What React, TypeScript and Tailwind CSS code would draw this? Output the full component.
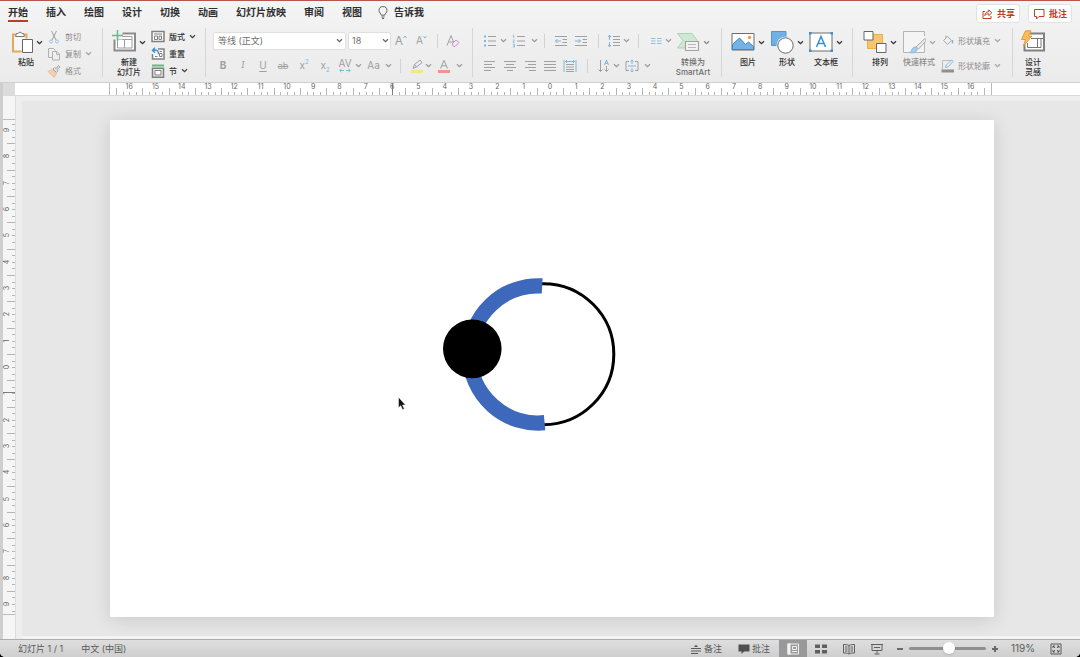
import React, { useState } from 'react';
import clsx from 'clsx';

const TABS = ['开始', '插入', '绘图', '设计', '切换', '动画', '幻灯片放映', '审阅', '视图'];

const H_MARKS = Array.from({ length: 33 }, (_, i) => Math.abs(i - 16));
const V_MARKS = Array.from({ length: 19 }, (_, i) => Math.abs(i - 9));

const Chevron: React.FC<{ className?: string }> = ({ className }) => (
  <svg className={clsx('w-[7px] h-[7px] shrink-0', className)} viewBox="0 0 7 7" fill="none" stroke="currentColor" strokeWidth="1.3">
    <path d="M1 2.200l2.500 2.500L6 2.200" />
  </svg>
);

const Glyph: React.FC<{ children: React.ReactNode; className?: string; size?: number }> = ({ children, className, size = 14 }) => (
  <svg
    className={clsx('shrink-0', size === 24 ? 'w-6 h-6' : size === 12 ? 'w-3 h-3' : 'w-3.5 h-3.5', className)}
    viewBox={`0 0 ${size} ${size}`}
    fill="none"
    stroke="currentColor"
    strokeWidth="1"
  >
    {children}
  </svg>
);

interface BigButtonProps {
  icon: React.ReactNode;
  lines: string[];
  menu?: boolean;
  muted?: boolean;
  dim?: boolean;
}

const BigButton: React.FC<BigButtonProps> = ({ icon, lines, menu = true, muted, dim }) => (
  <button className={clsx('flex flex-col items-center pt-0.5', menu ? 'w-[34px]' : 'w-6', muted ? 'text-[#8a8a8a]' : dim ? 'text-[#6e6e6e]' : 'text-[#2e2e2e]')}>
    <span className="flex items-center gap-[3px]">
      {icon}
      {menu && <Chevron className={muted ? 'text-[#a5a5a5]' : dim ? 'text-[#8a8a8a]' : 'text-[#333]'} />}
    </span>
    <span className="flex flex-col items-center mt-[3px] text-[8px] leading-[10px] font-medium whitespace-nowrap">
      {lines.map((line) => (
        <span key={line}>{line}</span>
      ))}
    </span>
  </button>
);

interface SmallButtonProps {
  icon: React.ReactNode;
  label: string;
  menu?: boolean;
  muted?: boolean;
  tall?: boolean;
}

const SmallButton: React.FC<SmallButtonProps> = ({ icon, label, menu, muted, tall }) => (
  <button
    className={clsx(
      'flex items-center gap-1 text-[8px] whitespace-nowrap',
      tall ? 'h-[25px]' : 'h-[17px]',
      muted ? 'text-[#8c8c8c]' : 'text-[#2e2e2e] font-medium'
    )}
  >
    {icon}
    {label}
    {menu && <Chevron className={muted ? 'text-[#a5a5a5]' : 'text-[#444]'} />}
  </button>
);

// Format tool: one icon or letter, greyed while nothing is selected
const Tool: React.FC<{ label: string; width?: string; children: React.ReactNode }> = ({ label, width = 'w-5', children }) => (
  <button aria-label={label} className={clsx('flex items-center justify-center h-[25px] shrink-0 text-[#a0a0a0]', width)}>
    {children}
  </button>
);

const MenuArrow: React.FC = () => (
  <button aria-label="更多" className="flex items-center h-[25px] shrink-0 text-[#9c9c9c]">
    <Chevron />
  </button>
);

const Divider: React.FC<{ width: string }> = ({ width }) => (
  <span className={clsx('flex justify-center shrink-0', width)}>
    <span className="w-px h-3.5 bg-[#d2d2d2]" />
  </span>
);

const Group: React.FC<{ className?: string; last?: boolean; children: React.ReactNode }> = ({ className, last, children }) => (
  <div className={clsx('flex items-start h-[49px] shrink-0', !last && 'border-r border-[#d6d6d6]', className)}>{children}</div>
);

const ALIGNMENTS = [
  { label: '左对齐', d: 'M1 2.5h11M1 5.5h8M1 8.5h11M1 11.5h7' },
  { label: '居中', d: 'M1 2.5h12M3 5.5h8M1 8.5h12M4 11.5h6' },
  { label: '右对齐', d: 'M2 2.5h11M5 5.5h8M2 8.5h11M6 11.5h7' },
  { label: '两端对齐', d: 'M1 2.5h12M1 5.5h12M1 8.5h12M1 11.5h12' },
];

const TabBar: React.FC = () => {
  const [active, setActive] = useState('开始');

  return (
    <div className="flex items-start h-[27px] pl-2 pr-2">
      <nav className="flex gap-[18px] text-[10px] font-bold text-[#2f2f2f]">
        {TABS.map((tab) => (
          <button
            key={tab}
            onClick={() => setActive(tab)}
            className={clsx('h-[21px] pt-[3px] leading-4 border-b-2 whitespace-nowrap', active === tab ? 'border-[#bf3d24]' : 'border-transparent')}
          >
            {tab}
          </button>
        ))}
        <button className="flex items-center gap-1.5 h-[21px] pt-0.5 -ml-1 pl-0.5">
          <svg className="w-[10px] h-[13px] text-[#666]" viewBox="0 0 10 13" fill="none" stroke="currentColor" strokeWidth="1">
            <path d="M3.2 9.2C3.2 7.4 1 6.8 1 4.6a4 4 0 018 0c0 2.2-2.2 2.8-2.2 4.6zM3.4 11h3.2M4 12.5h2" />
          </svg>
          告诉我
        </button>
      </nav>
      <div className="flex gap-2 ml-auto mt-[3px] text-[9px] font-bold text-[#bd4027]">
        <button className="flex items-center justify-center gap-1 w-[44px] h-[19px] rounded-[3px] bg-white border border-[#e3e1e1]">
          <Glyph size={12}>
            <path d="M4 3.5H2v7h8V8M3.8 7.6c.3-2.6 1.7-3.9 4-3.900V1.900l3 2.900-3 2.700V5.800c-1.800-.1-3 .4-4 1.800z" />
          </Glyph>
          共享
        </button>
        <button className="flex items-center justify-center gap-1 w-[44px] h-[19px] rounded-[3px] bg-white border border-[#e3e1e1]">
          <Glyph size={12}>
            <path d="M1.500 1.500h9.500v7H6l-2.500 2.500V8.500h-2z" />
          </Glyph>
          批注
        </button>
      </div>
    </div>
  );
};

const Ribbon: React.FC = () => {
  const [font, setFont] = useState('等线 (正文)');
  const [size, setSize] = useState('18');

  return (
    <div className="flex h-[54px] overflow-hidden">
      {/* Clipboard */}
      <Group className="pl-[9px] pr-[10px]">
        <BigButton
          lines={['粘贴']}
          icon={
            <Glyph size={24}>
              <path d="M4 4.500h13.500v17H4z" fill="#f6f6f6" stroke="#eaa75a" strokeWidth="2" />
              <path d="M6.500 6.500h9l-1-3h-1.700a1.900 1.900 0 00-3.600 0H7.500z" fill="#fff" stroke="#777" />
              <path d="M12.500 8.500H24V24H12.500z" fill="#f0f0f0" stroke="none" />
              <path d="M13.500 9.500h10v13h-10z" fill="#fff" stroke="#666" />
            </Glyph>
          }
        />
        <div className="flex flex-col items-start ml-1">
          <SmallButton
            muted
            label="剪切"
            icon={
              <Glyph>
                <path d="M4.500 1l4.500 9M9.500 1L5 10" stroke="#a0a0a0" />
                <circle cx="4" cy="11.500" r="1.500" stroke="#9cc4e2" />
                <circle cx="10" cy="11.500" r="1.500" stroke="#9cc4e2" />
              </Glyph>
            }
          />
          <SmallButton
            muted
            menu
            label="复制"
            icon={
              <Glyph className="text-[#b0b0b0]">
                <path d="M5 10.500H1.500v-9h5l2 2M5.500 4.500h4.500l2.500 2.500v6h-7zM9.500 4.500v3h3" />
              </Glyph>
            }
          />
          <SmallButton
            muted
            label="格式"
            icon={
              <Glyph>
                <path d="M1 7.500l4.500-2 4 4.500-2.500 3.500z" fill="#f6cfae" stroke="#e8bd9b" />
                <path d="M6 5l1.500-1.500 1.500 1 2.500-3 1.500 1.500-3 2.500 1 1.500L9.500 8.500z" fill="#e4e4e4" stroke="#a5a5a5" />
              </Glyph>
            }
          />
        </div>
      </Group>

      {/* Slides */}
      <Group className="pl-[9px] pr-[9px]">
        <BigButton
          lines={['新建', '幻灯片']}
          icon={
            <Glyph size={24}>
              <path d="M2.500 3.500h20.500v17H2.500z" stroke="#8b8b8b" strokeWidth="2" fill="#fff" />
              <path d="M5.500 6.500H20v3H5.500zM5.500 9.500v8.500H20V9.500M12.500 9.500V18" stroke="#9d9d9d" />
              <path d="M0 0h10.500v9.500H0z" fill="#f0f0f0" stroke="none" />
              <path d="M5.500 0v11M0 5.500h11" stroke="#5fbd86" strokeWidth="1.500" />
            </Glyph>
          }
        />
        <div className="flex flex-col items-start ml-[5px]">
          <SmallButton
            menu
            label="版式"
            icon={
              <Glyph className="text-[#808080]">
                <path d="M1 1.500h12v10H1z" strokeWidth="1.500" fill="#fff" />
                <path d="M3 4h8M3.500 6h3v3.500h-3zM8 6h2.500v3.500H8z" />
              </Glyph>
            }
          />
          <SmallButton
            label="重置"
            icon={
              <Glyph className="text-[#808080]">
                <path d="M7 2h6v10H1.500V7" strokeWidth="1.500" fill="#fff" />
                <path d="M8.500 4.500H11M4 9.500h2.500M8.500 6.500H11v3H8.500z" />
                <path d="M4 .8L1.500 3.300 4 5.800M1.500 3.300H5c2 0 2.500 1.500 2.500 4" stroke="#3f8fd0" strokeWidth="1.400" />
              </Glyph>
            }
          />
          <SmallButton
            menu
            label="节"
            icon={
              <Glyph className="text-[#808080]">
                <path d="M1 1.500h12" stroke="#5fbd86" strokeWidth="2" />
                <path d="M1.500 4.200h11v9h-11z" strokeWidth="1.500" />
                <path d="M4 6.500h6v4.500H4z" fill="#fff" />
              </Glyph>
            }
          />
        </div>
      </Group>

      {/* Font */}
      <Group className="flex-col pl-[7px] pr-2">
        <div className="flex items-center h-[25px]">
          <label className="relative flex items-center w-[133px]">
            <select
              aria-label="字体"
              value={font}
              onChange={(e) => setFont(e.target.value)}
              className="appearance-none w-full h-[18px] pl-1 bg-white border border-[#e0e0e0] rounded-[2px] text-[9px] leading-4 text-[#6f6f6f] outline-none"
            >
              <option>等线 (正文)</option>
              <option>等线 Light</option>
            </select>
            <Chevron className="absolute right-[3px] text-[#666] pointer-events-none" />
          </label>
          <label className="relative flex items-center w-[43px] ml-0.5">
            <select
              aria-label="字号"
              value={size}
              onChange={(e) => setSize(e.target.value)}
              className="appearance-none w-full h-[18px] pl-[3px] bg-white border border-[#e0e0e0] rounded-[2px] text-[9px] leading-4 text-[#6f6f6f] outline-none"
            >
              <option>18</option>
              <option>20</option>
              <option>24</option>
            </select>
            <Chevron className="absolute right-[2px] text-[#666] pointer-events-none" />
          </label>
          <Tool label="增大字号">
            <span className="text-[12px]">A</span>
            <svg className="w-1 h-1 mb-2" viewBox="0 0 4 4" fill="none" stroke="#83b9df">
              <path d="M.5 3L2 1l1.500 2" />
            </svg>
          </Tool>
          <Tool label="减小字号" width="w-[21px]">
            <span className="text-[10px]">A</span>
            <svg className="w-1 h-1 mb-2" viewBox="0 0 4 4" fill="none" stroke="#83b9df">
              <path d="M.5 1L2 3l1.500-2" />
            </svg>
          </Tool>
          <Divider width="w-[10px]" />
          <Tool label="清除格式" width="w-[22px]">
            <Glyph>
              <path d="M1 11.500L5 1.500l4 10M2.500 8h4.500" />
              <path d="M6 10l4-4 3 2.500-4 4H7.500z" fill="#f0eaf2" stroke="#c88fd0" />
            </Glyph>
          </Tool>
        </div>
        <div className="flex items-center h-[25px] text-[10px]">
          <Tool label="加粗">
            <span className="font-bold">B</span>
          </Tool>
          <Tool label="倾斜">
            <span className="font-serif italic">I</span>
          </Tool>
          <Tool label="下划线">
            <span className="underline underline-offset-2">U</span>
          </Tool>
          <Tool label="删除线">
            <span className="text-[9px] line-through">ab</span>
          </Tool>
          <Tool label="上标" width="w-[22px]">
            x<span className="text-[6px] mb-2 text-[#83b9df]">2</span>
          </Tool>
          <Tool label="下标">
            x<span className="text-[6px] mt-2 text-[#83b9df]">2</span>
          </Tool>
          <Tool label="字符间距">
            <span className="flex flex-col items-center leading-[9px]">
              AV
              <svg className="w-3 h-[5px]" viewBox="0 0 12 5" fill="none" stroke="#83b9df">
                <path d="M5 2.500H.8M2.500.8L.8 2.500l1.700 1.700M7 2.500h4.200M9.500.8l1.700 1.700-1.700 1.700" />
              </svg>
            </span>
          </Tool>
          <MenuArrow />
          <Tool label="更改大小写" width="w-[23px]">Aa</Tool>
          <MenuArrow />
          <Divider width="w-[16px]" />
          <Tool label="突出显示颜色" width="w-[17px]">
            <Glyph>
              <path d="M1 12.500h12" stroke="#f0ea7c" strokeWidth="3" />
              <path d="M3 9.500l1.500-4L10 1l2 2.500L6.500 8zM4.500 5.500l2 2.500" />
            </Glyph>
          </Tool>
          <MenuArrow />
          <Tool label="字体颜色" width="w-6">
            <Glyph>
              <path d="M1 12.500h12" stroke="#f3938b" strokeWidth="3" />
              <path d="M3.500 9.500L7 1.300l3.500 8.200M4.700 6.800h4.600" />
            </Glyph>
          </Tool>
          <MenuArrow />
        </div>
      </Group>

      {/* Paragraph */}
      <Group className="pl-[7px] pr-[11px]">
        <div className="flex flex-col">
          <div className="flex items-center h-[25px]">
            <Tool label="项目符号">
              <Glyph>
                <path d="M5 2.500h8M5 7h8M5 11.500h8" />
                <path d="M1 2.500h2M1 7h2M1 11.500h2" stroke="#7fb6dd" strokeWidth="2" />
              </Glyph>
            </Tool>
            <MenuArrow />
            <Tool label="编号" width="w-6">
              <Glyph>
                <path d="M5 2.500h8M5 7h8M5 11.500h8" />
                <path d="M.8 1.500l1-.5v3M.8 6h1.700L.9 8.500h1.800M.8 10.500h1.700v2.500H.8M1.200 11.800h1.300" stroke="#7fb6dd" strokeWidth=".8" />
              </Glyph>
            </Tool>
            <MenuArrow />
            <Divider width="w-[13px]" />
            <Tool label="减少缩进">
              <Glyph>
                <path d="M1 2.500h12M8.500 5.500H13M8.500 8.500H13M1 11.500h12" />
                <path d="M7 7H1.500M3.500 5L1.500 7l2 2" stroke="#7fb6dd" />
              </Glyph>
            </Tool>
            <Tool label="增加缩进">
              <Glyph>
                <path d="M1 2.500h12M8.500 5.500H13M8.500 8.500H13M1 11.500h12" />
                <path d="M1 7h5.500M4.500 5l2 2-2 2" stroke="#7fb6dd" />
              </Glyph>
            </Tool>
            <Divider width="w-[14px]" />
            <Tool label="行距" width="w-[18px]">
              <Glyph>
                <path d="M6 2.500h7M6 5.500h7M6 8.500h7M6 11.500h7" />
                <path d="M2.500 1v5M1 3l1.500-1.800L4 3M2.500 8v5M1 11l1.500 1.800L4 11" stroke="#7fb6dd" />
              </Glyph>
            </Tool>
            <MenuArrow />
            <Divider width="w-[17px]" />
            <Tool label="分栏" width="w-[18px]">
              <Glyph>
                <path d="M2 4.500h4.500M2 7h4.500M2 9.500h4.500M8 4.500h4.500M8 7h4.500M8 9.500h4.500" stroke="#8fc0e2" />
              </Glyph>
            </Tool>
            <MenuArrow />
          </div>
          <div className="flex items-center h-[25px]">
            {ALIGNMENTS.map(({ label, d }) => (
              <Tool key={label} label={label}>
                <Glyph>
                  <path d={d} />
                </Glyph>
              </Tool>
            ))}
            <Tool label="分散对齐">
              <Glyph>
                <path d="M3 5.500h8M3 8h8M3 10.500h8M3 12.500h8" />
                <path d="M1 1v12M13 1v12M2.500 2.500h9M4 1L2.500 2.500 4 4M10 1l1.500 1.500L10 4" stroke="#7fb6dd" />
              </Glyph>
            </Tool>
            <Divider width="w-[14px]" />
            <Tool label="文字方向" width="w-[19px]">
              <Glyph>
                <path d="M3.500 1v11.500M1.500 10.500l2 2 2-2M9.500 7v5.500M7.500 10.500l2 2 2-2" />
                <path d="M7.500 6L9.500 1l2 5M8.200 4.400h2.600" stroke="#7fb6dd" />
              </Glyph>
            </Tool>
            <MenuArrow />
            <Tool label="对齐文本" width="w-6">
              <Glyph>
                <path d="M4 2.500H1v9h3M10 2.500h3v9h-3" />
                <path d="M3 7h8M7 1v4M5.500 2.500L7 1l1.500 1.500M7 13V9M5.500 11.500L7 13l1.500-1.500" stroke="#7fb6dd" />
              </Glyph>
            </Tool>
            <MenuArrow />
          </div>
        </div>
        <div className="ml-1">
          <BigButton
            dim
            lines={['转换为', 'SmartArt']}
            icon={
              <Glyph size={24}>
                <path d="M1.500 3.500h14.500l5 6.500-3 8H1.500l5.500-7.500z" fill="#cfe8d4" stroke="#a9d3b1" />
                <path d="M9.500 11.500h13v9h-13z" fill="#f3f3f3" stroke="#a3a3a3" strokeWidth="1.200" />
                <path d="M12 14.500h8M12 17.500h8" stroke="#b8b8b8" />
              </Glyph>
            }
          />
        </div>
      </Group>

      {/* Insert */}
      <Group className="gap-[5px] pl-[9px] pr-[9px]">
        <BigButton
          lines={['图片']}
          icon={
            <Glyph size={24}>
              <path d="M1 3.500h22v16.500H1z" fill="#fff" stroke="#6d6d6d" />
              <path d="M1.500 14.500l7-6.500 6 6.500 3-2.500 5 4.500v3h-21z" fill="#74b2e6" stroke="#3d86c4" />
              <circle cx="18.500" cy="7.500" r="1.700" fill="#f09a4a" stroke="none" />
            </Glyph>
          }
        />
        <BigButton
          lines={['形状']}
          icon={
            <Glyph size={24}>
              <path d="M1.500 1.500h14.500v14H1.500z" fill="#6fb0e6" stroke="#4f97d3" />
              <circle cx="15.500" cy="15.500" r="9" fill="#f0f0f0" stroke="none" />
              <circle cx="15.500" cy="15.500" r="7.700" fill="#fff" stroke="#666" />
            </Glyph>
          }
        />
        <BigButton
          lines={['文本框']}
          icon={
            <Glyph size={24}>
              <path d="M1 3h22v18H1z" fill="#fff" stroke="#6d6d6d" />
              <path d="M7.500 17L12 6.500 16.500 17M9 13.500h6" stroke="#3a8fd3" strokeWidth="1.500" />
              <path d="M0 2h2.500v2.500H0zM21.500 2H24v2.500h-2.500zM0 19.500h2.500V22H0zM21.500 19.500H24V22h-2.500z" fill="#3a8fd3" stroke="none" />
            </Glyph>
          }
        />
      </Group>

      {/* Arrange and shape styles */}
      <Group className="pl-[10px] pr-[11px]">
        <BigButton
          lines={['排列']}
          icon={
            <Glyph size={24}>
              <path d="M4.500 4.500h15v14h-15z" fill="#f6c66a" stroke="#e9ae4d" />
              <path d="M1 1.500h9v8.500H1zM13.500 13.500h9.500v9h-9.500z" fill="#fff" stroke="#666" />
            </Glyph>
          }
        />
        <div className="ml-[5px]">
          <BigButton
            muted
            lines={['快速样式']}
            icon={
              <Glyph size={24}>
                <path d="M22.500 12v10.500H1.500v-21h21V6" fill="#f4f4f4" stroke="#b5b5b5" />
                <path d="M14 17l9-8.500c1 .6 1.500 1.500.5 3L16.500 19z" fill="#ececec" stroke="#a8a8a8" />
                <path d="M8 22.500c2-.5 1-5 5-5.500 2.500 1 2.500 2.500 1.500 4-1.500 2-4.500 2.200-6.500 1.500z" fill="#a9cdec" stroke="#8ab8df" />
              </Glyph>
            }
          />
        </div>
        <div className="flex flex-col items-start ml-1">
          <SmallButton
            muted
            menu
            tall
            label="形状填充"
            icon={
              <Glyph>
                <path d="M3.500 6.500l4-4 4 4-4 4zM6 4V1.500" stroke="#a5a5a5" />
                <path d="M12.500 6v3.500" stroke="#7fb6dd" strokeWidth="1.500" />
              </Glyph>
            }
          />
          <SmallButton
            muted
            menu
            tall
            label="形状轮廓"
            icon={
              <Glyph>
                <path d="M2.500 10V1.500H13" stroke="#bbb" />
                <path d="M5.500 8.500l.7-2.500L11.500 1l1.500 1.500L8 8z" stroke="#8dbde0" />
                <path d="M1.500 12h12.500" stroke="#8f8f8f" strokeWidth="3" />
              </Glyph>
            }
          />
        </div>
      </Group>

      {/* Designer */}
      <Group last className="pl-2">
        <BigButton
          menu={false}
          lines={['设计', '灵感']}
          icon={
            <Glyph size={24}>
              <path d="M9 3.500h14v17H3.500V14" fill="#fff" stroke="#808080" strokeWidth="2" />
              <path d="M10 8.500h12M6.500 17.500h13.500M16.500 9v8.500M20 9v8.500M6.500 13v4.500" stroke="#777" />
              <path d="M4.500.8h5.500L7.500 6H11L2.500 16l2-6.500h-4z" fill="#f7bd5b" stroke="#e79a35" />
            </Glyph>
          }
        />
      </Group>
    </div>
  );
};

const HorizontalRuler: React.FC = () => (
  <div className="flex h-3 ml-[3px] bg-white">
    <div className="w-3 shrink-0 bg-[#dcdcdc]" />
    <div className="relative flex flex-1 ml-[94px] mr-[88px] px-1.5 border-x border-[#bbb]">
      {H_MARKS.map((n, i) => (
        <div key={i} className="relative flex flex-1 items-end">
          <span className="flex-1 h-[7px] border-l border-[#b5b5b5]" />
          <span className="flex-1 h-[3px] border-l border-[#b5b5b5]" />
          <span className="flex-1 h-[3px] border-l border-[#b5b5b5]" />
          <span className="flex-1 h-[3px] border-l border-[#b5b5b5]" />
          <span className="absolute inset-x-0 top-0 text-center text-[7px] leading-[8px] text-[#666]">{n}</span>
        </div>
      ))}
      <span className="h-[7px] self-end border-l border-[#b5b5b5]" />
      <span className="absolute left-[32%] inset-y-0 w-px bg-[#7d7d7d]" />
    </div>
  </div>
);

const VerticalRuler: React.FC = () => (
  <div className="flex flex-col w-3 shrink-0 pt-[23px] pb-6 bg-[#f5f5f5]">
    <div className="relative flex flex-col flex-1 border-y border-[#bbb]">
      <div className="flex flex-col flex-1 -my-[3px]">
        {V_MARKS.map((n, i) => (
          <div key={i} className="relative flex flex-col flex-1 items-end">
            <span className={clsx('flex-1 w-2 border-t', i === 0 ? 'border-transparent' : 'border-[#b5b5b5]')} />
            <span className="flex-1 w-[3px] border-t border-[#b5b5b5]" />
            <span className="flex-1 w-[3px] border-t border-[#b5b5b5]" />
            <span className="flex-1 w-[3px] border-t border-[#b5b5b5]" />
            <span className="absolute inset-y-0 left-0 w-2 flex items-center justify-center">
              <span className="-rotate-90 text-[7px] leading-[8px] text-[#666]">{n}</span>
            </span>
          </div>
        ))}
      </div>
      <span className="absolute top-[55%] inset-x-0 h-px bg-[#7d7d7d]" />
    </div>
  </div>
);

const Slide: React.FC = () => (
  <div className="w-full aspect-video bg-white shadow-[0_3px_18px_rgba(0,0,0,0.13)]">
    <svg className="w-full h-full" viewBox="0 0 884 497" fill="none">
      <circle cx="433.300" cy="234" r="70.500" stroke="#000" strokeWidth="3" />
      <path d="M432.200 165.800A68.600 68.600 0 10434.600 302.600" stroke="#3d68bb" strokeWidth="15.300" />
      <circle cx="362.300" cy="228.700" r="29.300" fill="#000" />
      <path d="M288.500 277v10.500l2.300-2 1.800 4 1.700-.8-1.800-3.800h3z" fill="#111" stroke="#fff" strokeWidth=".5" />
    </svg>
  </div>
);

const StatusBar: React.FC = () => {
  const [view, setView] = useState('普通');
  const [zoom, setZoom] = useState(119);

  const views = [
    {
      label: '普通',
      icon: (
        <>
          <path d="M.5.500h3v11h-3z" fill="currentColor" stroke="none" />
          <path d="M1 1h10.500v10H1zM5.500 3.500h4v3h-4zM5 8.500h5" />
        </>
      ),
    },
    {
      label: '幻灯片浏览',
      icon: <path d="M0 1.500h5v3.500H0zM7 1.500h5v3.500H7zM0 7h5v3.500H0zM7 7h5v3.500H7z" fill="currentColor" stroke="none" />,
    },
    {
      label: '阅读视图',
      icon: <path d="M6 2.500C4.500 1.500 2.500 1.500.5 1.500v8.500c2 0 4 0 5.500 1 1.500-1 3.500-1 5.500-1V1.500c-2 0-4 0-5.500 1zM6 2.500V11M2 4h2.500M2 6h2.500M2 8h2.500M7.500 4H10M7.500 6H10M7.500 8H10" />,
    },
    {
      label: '幻灯片放映',
      icon: <path d="M0 1.500h12M1 1.500v6h10v-6M3 4.500h6M6 7.500v3M3.500 11h5" />,
    },
  ];

  return (
    <footer className="flex items-center h-[18px] shrink-0 pl-[18px] pr-[10px] border-t border-[#adadad] bg-gradient-to-b from-[#dedede] to-[#cfcfcf] text-[9px] text-[#5a5a5a]">
      <span>幻灯片 1 / 1</span>
      <button className="ml-[18px]">中文 (中国)</button>
      <div className="flex items-center h-full ml-auto">
        <button className="flex items-center gap-0.5">
          <Glyph size={12}>
            <path d="M1 5.500h10M1 8h10M1 10.500h7" />
            <path d="M4 4l2-2.500L8 4z" fill="currentColor" stroke="none" />
          </Glyph>
          备注
        </button>
        <button className="flex items-center gap-0.5 ml-4 mr-[9px]">
          <Glyph size={12}>
            <path d="M.5 1.500h11v7H6L3.500 11V8.500h-3z" fill="#4f4f4f" stroke="none" />
          </Glyph>
          批注
        </button>
        {views.map(({ label, icon }) => (
          <button
            key={label}
            aria-label={label}
            onClick={() => setView(label)}
            className={clsx('flex items-center justify-center w-7 h-full', view === label ? 'bg-[#999] text-[#f2f2f2]' : 'text-[#5f5f5f]')}
          >
            <Glyph size={12}>{icon}</Glyph>
          </button>
        ))}
        <button aria-label="缩小" onClick={() => setZoom(zoom - 10)} className="flex justify-center w-[18px]">
          <span className="w-1.5 h-0.5 bg-[#6a6a6a]" />
        </button>
        <input
          type="range"
          aria-label="显示比例"
          min={10}
          max={220}
          value={zoom}
          onChange={(e) => setZoom(Number(e.target.value))}
          className="appearance-none w-[77px] h-3 bg-transparent [&::-webkit-slider-runnable-track]:h-[3px] [&::-webkit-slider-runnable-track]:rounded-full [&::-webkit-slider-runnable-track]:bg-[#8f8f8f] [&::-webkit-slider-thumb]:appearance-none [&::-webkit-slider-thumb]:w-3 [&::-webkit-slider-thumb]:h-3 [&::-webkit-slider-thumb]:-mt-[5px] [&::-webkit-slider-thumb]:rounded-full [&::-webkit-slider-thumb]:bg-white [&::-webkit-slider-thumb]:shadow-sm"
        />
        <button aria-label="放大" onClick={() => setZoom(zoom + 10)} className="flex justify-center w-[18px]">
          <svg className="w-2 h-2" viewBox="0 0 8 8" stroke="#6a6a6a" strokeWidth="2">
            <path d="M4 1v6M1 4h6" />
          </svg>
        </button>
        <span className="w-[38px] text-center text-[10px]">{zoom}%</span>
        <button aria-label="适应窗口大小" className="flex justify-center w-7">
          <Glyph size={12}>
            <path d="M1 1h10v10H1zM3 5V3h2M7 3h2v2M9 7v2H7M5 9H3V7M3 3l2 2M9 3L7 5M9 9L7 7M3 9l2-2" />
          </Glyph>
        </button>
      </div>
    </footer>
  );
};

const App: React.FC = () => (
  <div className="min-h-screen flex flex-col bg-black font-['Inter','Noto_Sans_CJK_SC',sans-serif]">
    <div className="flex flex-col flex-1 overflow-hidden rounded-b-[5px] bg-[#f0f0f0]">
      <header className="border-t border-[#b5574d] bg-gradient-to-b from-[#f5f4f4] to-[#ebebeb]">
        <TabBar />
        <Ribbon />
      </header>
      <main className="flex flex-col flex-1 border-l-3 border-[#cfcfcf]">
        <div className="-ml-[3px] border-t border-[#d0d0d0]">
          <HorizontalRuler />
        </div>
        <div className="flex flex-1 border-t border-[#dadada]">
          <VerticalRuler />
          <div className="flex flex-col flex-1 pt-[5px] pl-1.5 bg-[#eeeeee] border-l border-[#dedede]">
            <div className="flex-1 pt-[19px] pl-[88px] pr-[86px] pb-[19px] overflow-hidden bg-[#e7e7e7]">
              <Slide />
            </div>
            <div className="h-[3px] bg-[#f4f4f4]" />
          </div>
        </div>
      </main>
      <StatusBar />
    </div>
  </div>
);

export default App;
